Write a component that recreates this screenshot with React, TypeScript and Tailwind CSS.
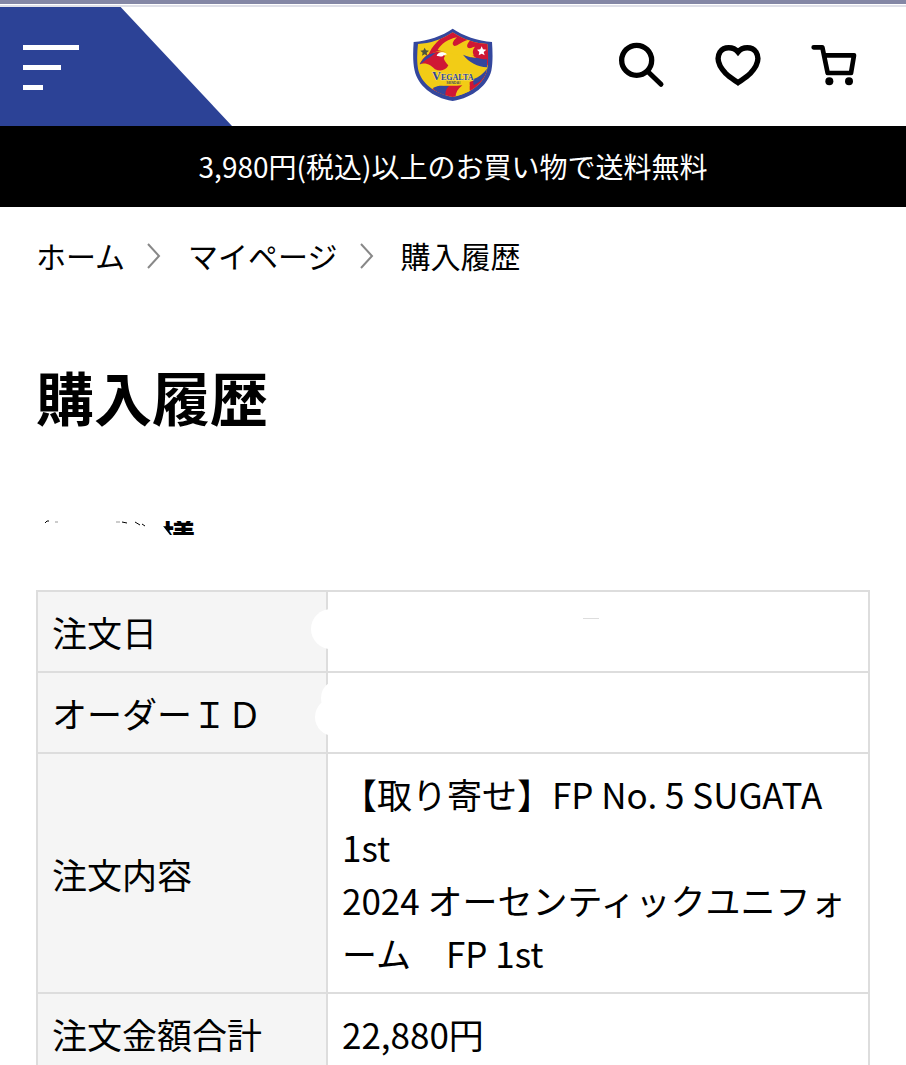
import React from "react";

type OrderRow = {
  label: string;
  lines: string[];
  mask?: React.ReactNode;
};

const DateMask: React.FC = () => (
  <svg
    className="absolute top-0 -left-5 w-[300px] h-20"
    viewBox="0 0 300 80"
    fill="white"
    aria-hidden="true"
  >
    <circle cx="23" cy="37" r="20" />
    <path d="M275 26.5h16" stroke="#dddddd" strokeWidth="1" />
  </svg>
);

const OrderIdMask: React.FC = () => (
  <svg
    className="absolute top-0 -left-5 w-10 h-20"
    viewBox="0 0 40 80"
    fill="white"
    aria-hidden="true"
  >
    <circle cx="31" cy="25" r="18" />
    <circle cx="26" cy="44" r="19" />
  </svg>
);

const orderRows: OrderRow[] = [
  { label: "注文日", lines: [], mask: <DateMask /> },
  { label: "オーダーＩＤ", lines: [], mask: <OrderIdMask /> },
  {
    label: "注文内容",
    lines: ["【取り寄せ】FP No. 5 SUGATA 1st", "2024 オーセンティックユニフォーム　FP 1st"],
  },
  { label: "注文金額合計", lines: ["22,880円"] },
];

const Emblem: React.FC = () => (
  <svg className="w-20 h-[74px]" viewBox="36 24 240 222" role="img" aria-label="Vegalta Sendai">
    <defs>
      <clipPath id="shield">
        <path d="M155 37C125 58 86 71 51 72C48 98 47 128 52 151C61 188 99 221 155 231C211 221 249 188 258 151C263 128 262 98 259 72C224 71 186 58 155 37Z" />
      </clipPath>
    </defs>
    <path
      d="M155 26C125 48 80 62 38 66C36 94 35 128 41 152C51 195 92 232 155 243C218 232 260 195 271 152C276 128 275 94 273 66C231 62 186 48 155 26Z"
      fill="#34479d"
    />
    <g clipPath="url(#shield)">
      <path d="M36 24h240v222H36z" fill="#f2cc16" />
      {/* wing */}
      <path
        d="M82 106C92 78 116 54 148 36H180L270 62V140C246 132 222 124 204 108C180 98 160 96 140 96C118 92 100 92 82 106Z"
        fill="#cf1735"
      />
      <path
        d="M110 90C120 72 140 58 168 52C154 64 152 74 160 78C172 78 180 62 214 56C200 66 194 78 202 84C212 86 214 80 222 80C212 92 214 104 226 114C190 110 146 100 110 90Z"
        fill="#f2cc16"
      />
      <path d="M186 104C208 114 228 116 258 110V142C230 140 204 128 186 104Z" fill="#34479d" />
      <path d="M214 106C230 108 246 106 262 100V116C244 120 228 116 214 106Z" fill="#cf1735" />
      {/* head and throat */}
      <path d="M56 132C68 108 88 94 112 96C122 98 130 104 132 110C124 114 132 124 142 136C136 150 120 156 102 148C92 136 76 126 56 132Z" fill="#cf1735" />
      <path d="M56 134C66 112 82 100 104 98L92 108C82 114 70 122 56 134Z" fill="#34479d" />
      <path d="M107 108C110 96 126 93 138 103L128 106C124 113 115 108 107 108Z" fill="white" />
      {/* tail */}
      <path d="M206 186C228 180 246 166 262 148V182L206 222Z" fill="#cf1735" />
      <path d="M216 178C234 172 248 160 258 146C256 166 242 184 218 196Z" fill="#34479d" />
      <path d="M92 208C116 192 150 200 184 196C168 208 162 222 164 238C132 234 108 222 92 208Z" fill="#cf1735" />
      <path d="M96 204C112 194 128 198 144 198C134 208 132 218 134 230C118 224 106 216 96 204Z" fill="#34479d" />
      <path d="M164 236C164 218 180 204 206 194C200 206 204 214 214 216C200 228 182 234 164 236Z" fill="#f2cc16" />
    </g>
    <path d="M71 83l4 8 9 1-7 6 2 9-8-4-8 4 2-9-7-6 9-1z" fill="#4d543c" />
    <path d="M242 79l4 9 10 1-8 7 3 10-9-5-9 5 2-10-7-7 10-1z" fill="white" />
    <text
      x="94"
      y="181"
      className="font-['Liberation_Serif',serif] font-bold"
      fontSize="36"
      fill="#2f438f"
      stroke="#f7e9a0"
      strokeWidth="2"
      paintOrder="stroke"
    >
      V<tspan fontSize="24">EGALTA</tspan>
    </text>
    <text x="136" y="193" className="font-['Liberation_Sans',sans-serif] font-bold" fontSize="11" fill="#4d5261">
      SENDAI
    </text>
  </svg>
);

const SearchIcon: React.FC = () => (
  <svg className="size-12" viewBox="54 30 144 144" fill="none" stroke="black" strokeLinecap="round" aria-hidden="true">
    <circle cx="110" cy="88" r="45" strokeWidth="16" />
    <path d="M144 122L183 160" strokeWidth="15" />
  </svg>
);

const HeartIcon: React.FC = () => (
  <svg className="size-12" viewBox="341 32 144 144" fill="none" stroke="black" strokeWidth="16" aria-hidden="true">
    <path d="M413 65C399 48 371 48 359 65C345 88 357 109 376 129C388 141 402 149 413 157C424 149 438 141 450 129C469 109 481 88 467 65C455 48 427 48 413 65Z" />
  </svg>
);

const CartIcon: React.FC = () => (
  <svg className="size-12" viewBox="629 32 144 144" fill="none" stroke="black" strokeWidth="14" aria-hidden="true">
    <path d="M640 51H666L682 128H752L761 75H671" strokeLinecap="round" strokeLinejoin="round" />
    <circle cx="687" cy="153" r="12" fill="black" stroke="none" />
    <circle cx="746" cy="153" r="12" fill="black" stroke="none" />
  </svg>
);

const Chevron: React.FC = () => (
  <svg className="ml-[22px] mr-[27px] w-[14px] h-[26px]" viewBox="0 0 14 26" fill="none" stroke="#888888" strokeWidth="2" aria-hidden="true">
    <path d="M1 1L12 13L1 25" />
  </svg>
);

const Header: React.FC = () => (
  <header>
    <div className="h-[7px] border-t-4 border-b-2 border-t-[#8487a5] border-b-[#dfe0e8]" />
    <div className="grid grid-cols-[1fr_auto_1fr] items-center h-[119px]">
      <button
        type="button"
        aria-label="メニュー"
        className="flex flex-col items-start justify-center gap-[15px] w-[232px] h-full pt-[2px] pl-[23px] bg-[#2c4296] [clip-path:polygon(0_0,52%_0,100%_100%,0_100%)]"
      >
        <span className="w-14 h-[5px] bg-white" />
        <span className="w-[38px] h-[5px] bg-white" />
        <span className="w-5 h-[5px] bg-white" />
      </button>
      <a href="#" className="pb-1">
        <Emblem />
      </a>
      <nav className="flex justify-end gap-12 pb-1 pr-12">
        <a href="#" aria-label="検索">
          <SearchIcon />
        </a>
        <a href="#" aria-label="お気に入り">
          <HeartIcon />
        </a>
        <a href="#" aria-label="カート">
          <CartIcon />
        </a>
      </nav>
    </div>
    <p className="py-5 bg-black text-center text-[28px] leading-[41px] text-white">
      3,980円(税込)以上のお買い物で送料無料
    </p>
  </header>
);

const App: React.FC = () => {
  return (
    <div
      lang="ja"
      className="min-h-screen bg-white text-black font-['Noto_Sans_CJK_JP',sans-serif]"
    >
      <Header />

      <main className="px-9 pt-[26px]">
        {/* Breadcrumb */}
        <nav className="flex items-center text-[30px] leading-[45px]">
          <a href="#">ホーム</a>
          <Chevron />
          <a href="#">マイページ</a>
          <Chevron />
          <span>購入履歴</span>
        </nav>

        <h1 className="mt-[75px] text-[58px] leading-[87px] font-bold">購入履歴</h1>

        {/* Customer name */}
        <h2 className="flex mt-[67px] text-[35px] leading-[53px] font-bold">
          <svg className="w-[124px] h-[53px]" viewBox="0 0 124 53" fill="none" stroke="black" aria-hidden="true">
            <path d="M9 16l2-2h2M86 15l5 1M99 15l5 3M106 17l3 2" strokeWidth="1" />
            <path d="M19 15h3M80 15h4" strokeWidth="1" stroke="#999999" />
          </svg>
          <span className="[clip-path:polygon(3px_14px,100%_14px,100%_28px,10px_28px,3px_19px)]">様</span>
        </h2>

        {/* Order details */}
        <table className="mt-[30px] w-full border-collapse text-[35px] leading-[53px]">
          <tbody>
            {orderRows.map((row) => (
              <tr key={row.label}>
                <th
                  scope="row"
                  className="w-[290px] px-[14px] py-[13px] border-2 border-[#dddddd] bg-[#f5f5f5] text-left font-normal"
                >
                  {row.label}
                </th>
                <td className="relative h-[81px] px-[14px] py-[13px] border-2 border-[#dddddd]">
                  {row.lines.map((line) => (
                    <p key={line}>{line}</p>
                  ))}
                  {row.mask}
                </td>
              </tr>
            ))}
          </tbody>
        </table>
      </main>
    </div>
  );
};

export default App;
